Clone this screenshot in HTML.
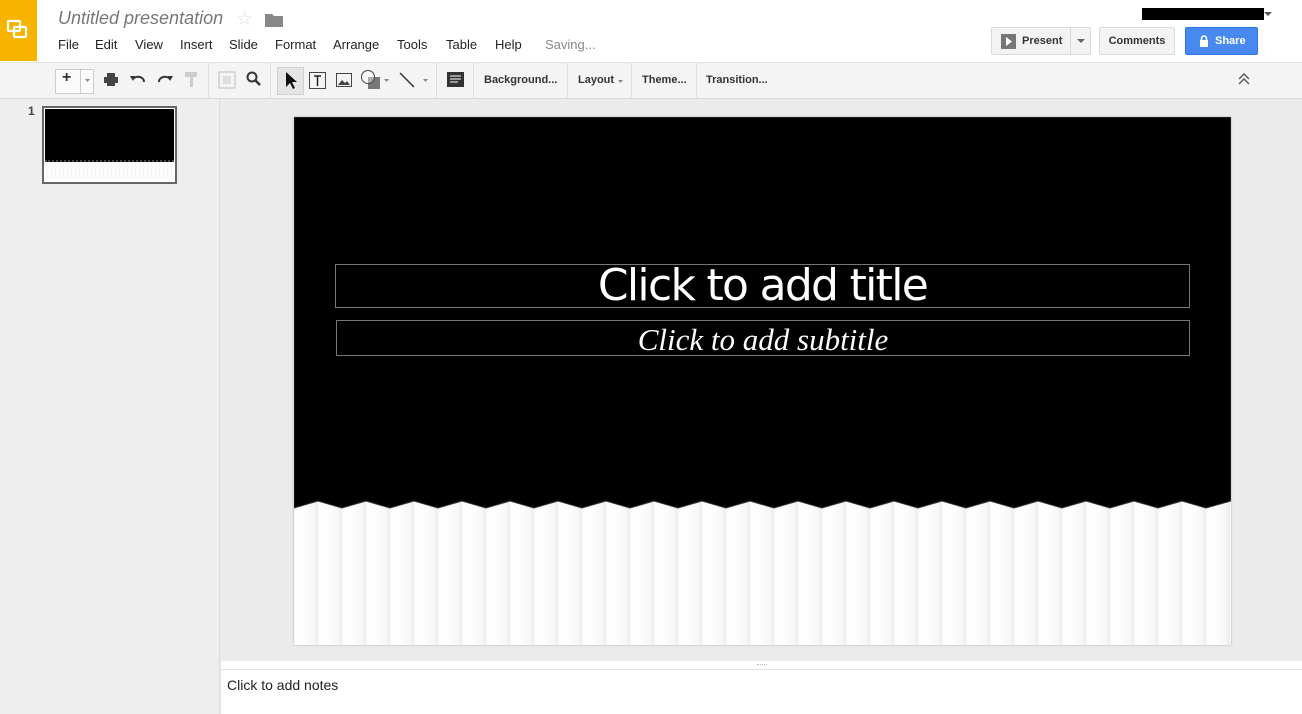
<!DOCTYPE html>
<html><head><meta charset="utf-8"><style>
*{margin:0;padding:0;box-sizing:border-box}
body{width:1302px;height:714px;overflow:hidden;font-family:"Liberation Sans",Arial,sans-serif;background:#ebebeb;position:relative}
.abs{position:absolute}
.menu span{position:absolute;top:37px;font-size:13px;color:#222}
.tb{position:absolute;top:62px;left:0;width:1302px;height:37px;background:#f4f4f4;border-top:1px solid #e2e2e2;border-bottom:1px solid #d8d8d8}
.tbt{position:absolute;top:11px;font-size:11px;font-weight:bold;color:#333}
.sep{position:absolute;top:0;width:1px;height:36px;background:#e0e0e0}
.btn{position:absolute;top:27px;height:28px;border:1px solid #d9d9d9;border-radius:2px;background:#f3f3f3;font-size:11px;font-weight:bold;color:#333;line-height:26px}
</style></head><body>
<div class="abs" style="left:0;top:0;width:1302px;height:62px;background:#fff"></div>
<div class="abs" style="left:0;top:0;width:37px;height:61px;background:#f6b400"></div>
<svg class="abs" style="left:6px;top:19px" width="24" height="22"><rect x="2" y="2" width="12" height="10" rx="1" fill="none" stroke="#fff" stroke-width="2.2"/><rect x="8" y="8" width="12" height="10" rx="1" fill="none" stroke="#fff" stroke-width="2.2"/></svg>
<div class="abs" style="left:58px;top:8px;font-size:18px;font-style:italic;color:#777">Untitled presentation</div>
<div class="abs" style="left:236px;top:8px;font-size:19px;color:#ddd">☆</div>
<svg class="abs" style="left:265px;top:13px" width="18" height="14"><path d="M0 1h7l2 2h9v11H0z" fill="#888"/></svg>
<div class="menu"><span style="left:58px">File</span><span style="left:95px">Edit</span><span style="left:135px">View</span><span style="left:180px">Insert</span><span style="left:229px">Slide</span><span style="left:275px">Format</span><span style="left:333px">Arrange</span><span style="left:397px">Tools</span><span style="left:446px">Table</span><span style="left:495px">Help</span><span style="left:545px;color:#888">Saving...</span></div>
<div class="abs" style="left:1142px;top:8px;width:122px;height:12px;background:#000"></div>
<svg class="abs" style="left:1264px;top:12px" width="8" height="5"><path d="M0 0h8L4 4z" fill="#555"/></svg>
<div class="btn" style="left:991px;width:100px"><svg style="position:absolute;left:9px;top:6px" width="15" height="15"><rect width="15" height="15" fill="#777"/><path d="M5 3l6 4.5-6 4.5z" fill="#fff"/></svg><span style="position:absolute;left:30px">Present</span><div style="position:absolute;left:78px;top:0;width:1px;height:26px;background:#d9d9d9"></div><svg style="position:absolute;left:85px;top:11px" width="8" height="5"><path d="M0 0h8L4 4z" fill="#666"/></svg></div>
<div class="btn" style="left:1099px;width:76px;text-align:center">Comments</div>
<div class="btn" style="left:1185px;width:73px;background:#4889f0;border-color:#3079ed;color:#fff"><svg style="position:absolute;left:13px;top:7px" width="10" height="12"><path d="M2.5 5V3.5a2.5 2.5 0 015 0V5" fill="none" stroke="#fff" stroke-width="1.6"/><rect x="1" y="5" width="8" height="7" fill="#fff"/></svg><span style="position:absolute;left:29px">Share</span></div>
<div class="tb">
<div style="position:absolute;left:55px;top:6px;width:39px;height:25px;border:1px solid #ccc;background:#fafafa"></div>
<div style="position:absolute;left:80px;top:6px;width:1px;height:25px;background:#ccc"></div>
<div class="tbt" style="left:62px;top:6px;font-size:16px">+</div>
<svg style="position:absolute;left:85px;top:16px" width="5" height="3"><path d="M0 0h5L2.5 3z" fill="#888"/></svg>
<svg style="position:absolute;left:104px;top:10px" width="14" height="14"><rect x="3" y="0" width="8" height="4" fill="#444"/><rect x="0" y="4" width="14" height="6" fill="#444"/><rect x="3" y="9" width="8" height="4" fill="#444"/></svg>
<svg style="position:absolute;left:130px;top:10px" width="16" height="12"><path d="M3 6a6 5 0 0111 3" fill="none" stroke="#333" stroke-width="2"/><path d="M0 3l5 0-2 5z" fill="#333"/></svg>
<svg style="position:absolute;left:157px;top:10px" width="16" height="12"><path d="M13 6a6 5 0 00-11 3" fill="none" stroke="#333" stroke-width="2"/><path d="M16 3l-5 0 2 5z" fill="#333"/></svg>
<svg style="position:absolute;left:185px;top:9px" width="14" height="16"><rect x="0" y="0" width="12" height="5" fill="#ccc"/><rect x="5" y="5" width="3" height="10" fill="#ccc"/></svg>
<div class="sep" style="left:208px"></div>
<svg style="position:absolute;left:218px;top:8px" width="18" height="18"><rect x="1" y="1" width="16" height="16" fill="none" stroke="#bbb"/><rect x="5" y="5" width="8" height="8" fill="#ddd"/></svg>
<svg style="position:absolute;left:246px;top:8px" width="16" height="16"><circle cx="6" cy="6" r="4.5" fill="none" stroke="#333" stroke-width="2"/><path d="M9 9l5 5" stroke="#333" stroke-width="2.5"/></svg>
<div class="sep" style="left:270px"></div>
<div style="position:absolute;left:277px;top:4px;width:27px;height:28px;background:#e5e5e5;border:1px solid #d0d0d0"></div>
<svg style="position:absolute;left:285px;top:9px" width="12" height="17"><path d="M1 0v15l4-4 3 6 2-1-3-6h5z" fill="#111"/></svg>
<svg style="position:absolute;left:308px;top:8px" width="19" height="19"><rect x="1.5" y="1.5" width="16" height="16" fill="none" stroke="#444"/><path d="M6 5h7M9.5 5v10" stroke="#222" stroke-width="1.5"/></svg>
<svg style="position:absolute;left:336px;top:10px" width="16" height="14"><rect x="0.5" y="0.5" width="15" height="13" fill="none" stroke="#444"/><path d="M2 12l4-5 3 3 2-2 3 4z" fill="#444"/></svg>
<svg style="position:absolute;left:360px;top:6px" width="22" height="22"><rect x="8" y="8" width="12" height="12" fill="#777"/><circle cx="8" cy="8" r="6.5" fill="#fff" fill-opacity=".4" stroke="#444"/></svg>
<svg style="position:absolute;left:384px;top:16px" width="5" height="3"><path d="M0 0h5L2.5 3z" fill="#888"/></svg>
<svg style="position:absolute;left:399px;top:9px" width="16" height="16"><path d="M1 1l14 14" stroke="#333" stroke-width="1.5"/></svg>
<svg style="position:absolute;left:423px;top:16px" width="5" height="3"><path d="M0 0h5L2.5 3z" fill="#888"/></svg>
<div class="sep" style="left:436px"></div>
<svg style="position:absolute;left:447px;top:9px" width="17" height="15"><rect width="17" height="15" fill="#333"/><path d="M3 4h11M3 7h11M3 10h8" stroke="#fff"/></svg>
<div class="sep" style="left:473px"></div>
<div class="tbt" style="left:484px">Background...</div>
<div class="sep" style="left:567px"></div>
<div class="tbt" style="left:578px">Layout</div>
<svg style="position:absolute;left:618px;top:17px" width="5" height="3"><path d="M0 0h5L2.5 3z" fill="#888"/></svg>
<div class="sep" style="left:631px"></div>
<div class="tbt" style="left:642px">Theme...</div>
<div class="sep" style="left:696px"></div>
<div class="tbt" style="left:706px">Transition...</div>
<svg style="position:absolute;left:1238px;top:10px" width="12" height="13"><path d="M1 6l5-5 5 5M1 11l5-5 5 5" fill="none" stroke="#555" stroke-width="1.4"/></svg>
</div>
<div class="abs" style="left:0;top:99px;width:220px;height:615px;background:#eee;border-right:1px solid #dcdcdc"></div>
<div class="abs" style="left:28px;top:104px;font-size:12px;font-weight:bold;color:#444">1</div>
<div class="abs" style="left:42px;top:106px;width:135px;height:78px;border:2px solid #666;background:#fff;padding:1px">
<div style="width:100%;height:53px;background:#000;border-bottom:2px dotted #444"></div>
<div style="width:100%;height:17px;background:repeating-linear-gradient(90deg,#fff 0,#f4f4f4 3px,#fff 4px)"></div></div>
<div class="abs" style="left:294px;top:117px;width:937px;height:528px;box-shadow:0 0 2px #aaa;overflow:hidden">
<svg width="937" height="528" style="position:absolute;left:0;top:0">
<defs><linearGradient id="g" x1="0" x2="1"><stop offset="0" stop-color="#f6f6f6"/><stop offset=".1" stop-color="#fff"/><stop offset=".5" stop-color="#fdfdfd"/><stop offset=".85" stop-color="#f5f5f5"/><stop offset="1" stop-color="#ededed"/></linearGradient>
<pattern id="p" width="24" height="528" patternUnits="userSpaceOnUse"><rect width="24" height="528" fill="url(#g)"/></pattern></defs>
<rect width="937" height="528" fill="url(#p)"/>
<path d="M0 0H937V384L912 391 888 384 864 391 840 384 816 391 792 384 768 391 744 384 720 391 696 384 672 391 648 384 624 391 600 384 576 391 552 384 528 391 504 384 480 391 456 384 432 391 408 384 384 391 360 384 336 391 312 384 288 391 264 384 240 391 216 384 192 391 168 384 144 391 120 384 96 391 72 384 48 391 24 384 0 391Z" fill="#000" stroke="#333" stroke-width="1"/>
</svg>
<div style="position:absolute;left:41px;top:147px;width:855px;height:44px;border:1px solid #777;color:#fff;font-family:'DejaVu Sans',sans-serif;font-size:44px;text-align:center;line-height:42px;letter-spacing:-1.7px">Click to add title</div>
<div style="position:absolute;left:42px;top:203px;width:854px;height:36px;border:1px solid #777;color:#fff;font-family:'Liberation Serif',serif;font-style:italic;font-size:31px;text-align:center;line-height:38px">Click to add subtitle</div>
</div>
<div class="abs" style="left:221px;top:661px;width:1081px;height:53px;background:#fff"></div>
<div class="abs" style="left:221px;top:669px;width:1081px;height:1px;background:#e3e3e3"></div>
<div class="abs" style="left:757px;top:664px;width:10px;height:2px;border-top:1px dotted #bbb"></div>
<div class="abs" style="left:227px;top:677px;font-size:14px;color:#222">Click to add notes</div>
</body></html>
